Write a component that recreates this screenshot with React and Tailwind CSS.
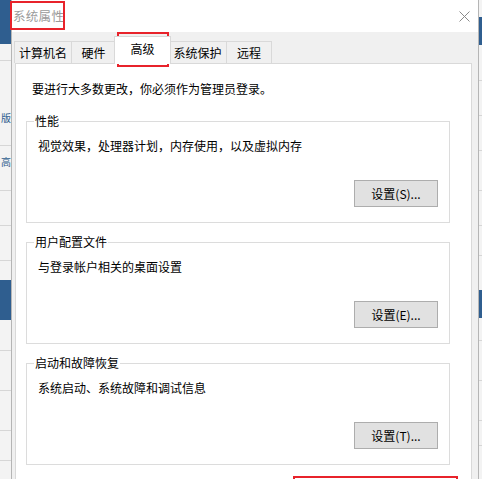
import React from 'react';

const font = { fontFamily: '"Noto Sans CJK SC", "Noto Sans", sans-serif' };

// 背景窗口的横线位置
const leftLines = [60, 145, 190, 225, 260, 350, 390, 430, 460];
const rightLines = [80, 115, 150, 190, 225, 255, 340, 380, 420, 445];

const Tab = ({ label, width, active }) =>
  active ? (
    <div
      className={`relative z-10 -mx-[2px] -mb-[1px] flex h-[28px] items-start justify-center border border-b-0 border-[#d9d9d9] bg-white pt-[3px] ${width}`}
    >
      {label}
    </div>
  ) : (
    <div
      className={`flex h-[22px] items-center justify-center border border-b-0 border-l-0 border-[#d9d9d9] bg-[#f0f0f0] first:border-l ${width}`}
    >
      {label}
    </div>
  );

const Group = ({ title, text, button }) => (
  <fieldset className="border border-[#dcdcdc] pb-[15px]">
    <legend className="ml-[7px] px-[1px] text-[12px] leading-[16px] text-black">{title}</legend>
    <div className="mt-[9px] pl-[11px] text-[12px] leading-[16px]">{text}</div>
    <div className="mt-[26px] flex justify-end pr-[11px]">
      <button className="flex h-[27px] w-[84px] items-center justify-center border border-[#adadad] bg-[#e1e1e1] text-[12px] text-black">
        {button}
      </button>
    </div>
  </fieldset>
);

export default function App() {
  return (
    <div className="relative h-[479px] w-[482px] overflow-hidden bg-[#f3f3f3] text-black" style={font}>
      {/* 后面的窗口 */}
      <div className="absolute left-0 top-0 h-[44px] w-[11px] bg-[#2f5e8f]" />
      <div className="absolute left-0 top-[280px] h-[40px] w-[11px] bg-[#2f5e8f]" />
      <div className="absolute left-[1px] top-[112px] text-[10px] leading-[12px] text-[#2f5e8f]">版</div>
      <div className="absolute left-[1px] top-[156px] text-[10px] leading-[12px] text-[#2f5e8f]">高</div>
      {leftLines.map(y => (
        <div key={y} className="absolute left-0 h-px w-[11px] bg-[#d6d6d6]" style={{ top: y }} />
      ))}
      <div className="absolute right-0 top-[17px] h-[28px] w-[3px] bg-[#2f5e8f]" />
      <div className="absolute right-0 top-[290px] h-[28px] w-[3px] bg-[#2f5e8f]" />
      {rightLines.map(y => (
        <div key={y} className="absolute right-0 h-px w-[3px] bg-[#d6d6d6]" style={{ top: y }} />
      ))}

      {/* 系统属性对话框 */}
      <div className="absolute left-[11px] top-0 flex h-[490px] w-[468px] flex-col border-x border-[#b5b5b5] bg-[#f0f0f0]">
        <div className="flex h-[32px] items-center justify-between bg-white pl-[1px] pr-[7px]">
          <span className="text-[12.5px] tracking-[0.3px] text-[#9a9a9a]">系统属性</span>
          <svg width="11" height="11" viewBox="0 0 11 11" className="mr-[1px]">
            <path d="M0.5 0.5 L10.5 10.5 M10.5 0.5 L0.5 10.5" stroke="#8a8a8a" strokeWidth="1" fill="none" />
          </svg>
        </div>

        <div className="ml-[2px] mt-[4px] flex items-end text-[12px]">
          <Tab label="计算机名" width="w-[58px]" />
          <Tab label="硬件" width="w-[44px]" />
          <Tab label="高级" width="w-[57px]" active />
          <Tab label="系统保护" width="w-[58px]" />
          <Tab label="远程" width="w-[45px]" />
        </div>

        <div className="ml-[3px] w-[457px] flex-1 border border-[#d9d9d9] bg-white pl-[10px] pr-[21px] pt-[17px]">
          <div className="pl-[6px] text-[12px] leading-[16px]">要进行大多数更改，你必须作为管理员登录。</div>
          <div className="mt-[16px] flex flex-col gap-[11px]">
            <Group title="性能" text="视觉效果，处理器计划，内存使用，以及虚拟内存" button="设置(S)..." />
            <Group title="用户配置文件" text="与登录帐户相关的桌面设置" button="设置(E)..." />
            <Group title="启动和故障恢复" text="系统启动、系统故障和调试信息" button="设置(T)..." />
          </div>
        </div>
      </div>

      {/* 红色标注框 */}
      <div className="absolute left-[10px] top-[1px] h-[29px] w-[55px] border-2 border-[#e8232b]" />
      <div className="absolute left-[117px] top-[32px] h-[35px] w-[52px] border-2 border-[#e8232b]" />
      <div className="absolute left-[293px] top-[476px] h-[20px] w-[165px] border-2 border-[#e8232b]" />
    </div>
  );
}
